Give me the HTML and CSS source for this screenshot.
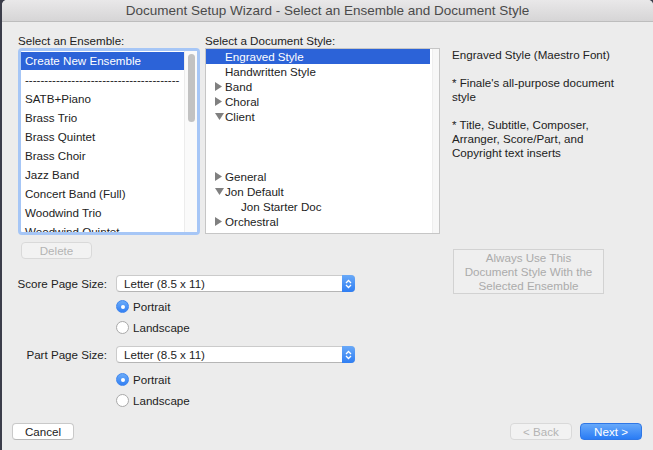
FILE: index.html
```html
<!DOCTYPE html>
<html>
<head>
<meta charset="utf-8">
<link rel="stylesheet" href="styles.css">
</head>
<body>
<div class="window">
  <div class="titlebar">Document Setup Wizard - Select an Ensemble and Document Style</div>
  <div class="content">
    <div class="top">
      <div class="col-ens">
        <div class="label">Select an Ensemble:</div>
        <div class="ens-box">
          <div class="ens-list">
            <div class="row sel">Create New Ensemble</div>
            <div class="row dashes">----------------------------------------</div>
            <div class="row">SATB+Piano</div>
            <div class="row">Brass Trio</div>
            <div class="row">Brass Quintet</div>
            <div class="row">Brass Choir</div>
            <div class="row">Jazz Band</div>
            <div class="row">Concert Band (Full)</div>
            <div class="row">Woodwind Trio</div>
            <div class="row">Woodwind Quintet</div>
          </div>
          <div class="vscroll"><div class="thumb"></div></div>
        </div>
      </div>
      <div class="col-style">
        <div class="label">Select a Document Style:</div>
        <div class="style-box">
          <div class="style-list">
            <div class="trow sel"><span class="tw"></span>Engraved Style</div>
            <div class="trow"><span class="tw"></span>Handwritten Style</div>
            <div class="trow"><span class="tw"><svg width="7" height="9" viewBox="0 0 7 9"><polygon points="0,0 7,4.5 0,9" fill="#808080"/></svg></span>Band</div>
            <div class="trow"><span class="tw"><svg width="7" height="9" viewBox="0 0 7 9"><polygon points="0,0 7,4.5 0,9" fill="#808080"/></svg></span>Choral</div>
            <div class="trow"><span class="tw"><svg width="9" height="7" viewBox="0 0 9 7"><polygon points="0,0 9,0 4.5,7" fill="#808080"/></svg></span>Client</div>
            <div class="trow"></div>
            <div class="trow"></div>
            <div class="trow"></div>
            <div class="trow"><span class="tw"><svg width="7" height="9" viewBox="0 0 7 9"><polygon points="0,0 7,4.5 0,9" fill="#808080"/></svg></span>General</div>
            <div class="trow"><span class="tw"><svg width="9" height="7" viewBox="0 0 9 7"><polygon points="0,0 9,0 4.5,7" fill="#808080"/></svg></span>Jon Default</div>
            <div class="trow child"><span class="tw"></span>Jon Starter Doc</div>
            <div class="trow"><span class="tw"><svg width="7" height="9" viewBox="0 0 7 9"><polygon points="0,0 7,4.5 0,9" fill="#808080"/></svg></span>Orchestral</div>
          </div>
          <div class="vscroll2"></div>
        </div>
      </div>
      <div class="col-desc">
        <p>Engraved Style (Maestro Font)</p>
        <p>* Finale's all-purpose document<br>style</p>
        <p>* Title, Subtitle, Composer,<br>Arranger, Score/Part, and<br>Copyright text inserts</p>
      </div>
    </div>
    <div class="lower">
      <div class="lower-left">
        <div class="btn disabled delete">Delete</div>
        <div class="field score">
          <div class="flabel">Score Page Size:</div>
          <div class="popup"><span>Letter (8.5 x 11)</span><span class="stepper"><svg width="7" height="10" viewBox="0 0 7 10"><polyline points="1,4 3.5,1.5 6,4" fill="none" stroke="#fff" stroke-width="1.3"/><polyline points="1,6 3.5,8.5 6,6" fill="none" stroke="#fff" stroke-width="1.3"/></svg></span></div>
        </div>
        <div class="radios r1">
          <div class="radio on"><span class="dot"></span>Portrait</div>
          <div class="radio"><span class="dot"></span>Landscape</div>
        </div>
        <div class="field part">
          <div class="flabel">Part Page Size:</div>
          <div class="popup"><span>Letter (8.5 x 11)</span><span class="stepper"><svg width="7" height="10" viewBox="0 0 7 10"><polyline points="1,4 3.5,1.5 6,4" fill="none" stroke="#fff" stroke-width="1.3"/><polyline points="1,6 3.5,8.5 6,6" fill="none" stroke="#fff" stroke-width="1.3"/></svg></span></div>
        </div>
        <div class="radios r2">
          <div class="radio on"><span class="dot"></span>Portrait</div>
          <div class="radio"><span class="dot"></span>Landscape</div>
        </div>
      </div>
      <div class="always">Always Use This<br>Document Style With the<br>Selected Ensemble</div>
    </div>
    <div class="bottom">
      <div class="btn cancel">Cancel</div>
      <div class="spacer"></div>
      <div class="btn disabled back">&lt; Back</div>
      <div class="btn primary next">Next &gt;</div>
    </div>
  </div>
</div>
</body>
</html>
```
FILE: styles.css
```css
html, body {
  margin: 0;
  padding: 0;
}
body {
  background: #3b3d4a;
  width: 653px;
  height: 450px;
  overflow: hidden;
  font-family: "Liberation Sans", Arial, sans-serif;
  font-size: 11.6px;
  color: #222;
}
.window {
  margin-left: 2px;
  width: 651px;
  height: 450px;
  background: #ececec;
  border-top-left-radius: 5px;
  border-top-right-radius: 5px;
  overflow: hidden;
}
.titlebar {
  height: 21px;
  line-height: 22px;
  border-bottom: 1px solid #bdbdbd;
  background: linear-gradient(#e9e8e9, #d6d5d6);
  text-align: center;
  font-size: 13.5px;
  color: #4a4a4a;
}
.content {
  padding-left: 16px;
}
.top {
  display: flex;
  margin-top: 12px;
  height: 201px;
}
.label {
  height: 14px;
  line-height: 14px;
}
.col-ens {
  width: 182px;
}
.ens-box {
  display: flex;
  height: 181px;
  border: 3px solid #a6c6f6;
  border-radius: 4px;
  background: #fff;
}
.ens-list {
  flex: 1;
  overflow: hidden;
  padding-top: 1px;
}
.row {
  height: 19px;
  line-height: 18px;
  padding-left: 4px;
  white-space: nowrap;
}
.row.sel {
  height: 18px;
  margin-bottom: 1px;
  background: #2c63d8;
  color: #fff;
}
.vscroll {
  width: 12px;
  background: #fafafa;
  border-left: 1px solid #ececec;
  padding-top: 3px;
}
.thumb {
  width: 7px;
  height: 68px;
  margin-left: 3px;
  border-radius: 4px;
  background: #c2c2c2;
}
.col-style {
  width: 235px;
  margin-left: 5px;
}
.style-box {
  display: flex;
  height: 184px;
  border: 1px solid #c6c6c6;
  background: #fff;
}
.style-list {
  flex: 1;
  overflow: hidden;
}
.trow {
  display: flex;
  align-items: center;
  height: 15px;
  line-height: 15px;
  white-space: nowrap;
}
.trow.sel {
  background: #2c63d8;
  color: #fff;
  margin-right: 2px;
}
.tw {
  width: 19px;
  padding-left: 9px;
  box-sizing: border-box;
  display: flex;
  align-items: center;
}
.trow.child .tw {
  width: 35px;
}
.vscroll2 {
  width: 6px;
  background: #f7f7f7;
  border-left: 1px solid #eeeeee;
}
.col-desc {
  margin-left: 12px;
  padding-top: 14px;
  line-height: 14px;
}
.col-desc p {
  margin: 0 0 14px 0;
}
.lower {
  display: flex;
  height: 188px;
}
.lower-left {
  width: 435px;
}
.btn {
  box-sizing: border-box;
  height: 17px;
  line-height: 15px;
  text-align: center;
  border: 1px solid #c9c9c9;
  border-bottom-color: #b8b8b8;
  border-radius: 4px;
  background: #fff;
  color: #222;
}
.btn.disabled {
  background: #f2f2f2;
  border-color: #d9d9d9;
  color: #b4b4b4;
}
.delete {
  width: 71px;
  margin-left: 3px;
  margin-top: 7px;
}
.field {
  display: flex;
  align-items: center;
}
.score {
  margin-top: 16px;
}
.part {
  margin-top: 8px;
}
.flabel {
  width: 89px;
  display: flex;
  justify-content: flex-end;
  white-space: nowrap;
  margin-right: 9px;
}
.popup {
  box-sizing: border-box;
  display: flex;
  align-items: center;
  justify-content: space-between;
  width: 239px;
  height: 17px;
  background: #fff;
  border: 1px solid #cbcbcb;
  border-bottom-color: #b5b5b5;
  border-radius: 4px;
  padding-left: 7px;
}
.stepper {
  width: 13px;
  height: 17px;
  margin-right: -1px;
  border-radius: 0 4px 4px 0;
  background: linear-gradient(#69a9f8, #2f7ef3);
  display: flex;
  align-items: center;
  justify-content: center;
}
.radios {
  margin-left: 98px;
}
.r1 {
  margin-top: 4px;
}
.r2 {
  margin-top: 6px;
}
.radio {
  display: flex;
  align-items: center;
  height: 21px;
}
.radio .dot {
  box-sizing: border-box;
  width: 13px;
  height: 13px;
  border-radius: 50%;
  border: 1px solid #a9a9a9;
  background: #fff;
  margin-right: 4px;
  display: flex;
  align-items: center;
  justify-content: center;
}
.radio.on .dot {
  border-color: #3f86ee;
  background: linear-gradient(#6aabf9, #3380f4);
}
.radio.on .dot::after {
  content: "";
  width: 4px;
  height: 4px;
  border-radius: 50%;
  background: #fff;
}
.always {
  box-sizing: border-box;
  width: 151px;
  height: 45px;
  margin-top: 14px;
  border: 1px solid #d2d2d2;
  background: #efefef;
  color: #ababab;
  text-align: center;
  line-height: 14px;
  padding-top: 1px;
}
.bottom {
  display: flex;
  margin-left: -6px;
  margin-right: 11px;
}
.cancel {
  width: 62px;
}
.spacer {
  flex: 1;
}
.back {
  width: 62px;
}
.next {
  width: 62px;
  margin-left: 8px;
}
.btn.primary {
  background: linear-gradient(#67a9fa, #2a7cf5);
  border-color: #2f77e6;
  color: #fff;
}
```
